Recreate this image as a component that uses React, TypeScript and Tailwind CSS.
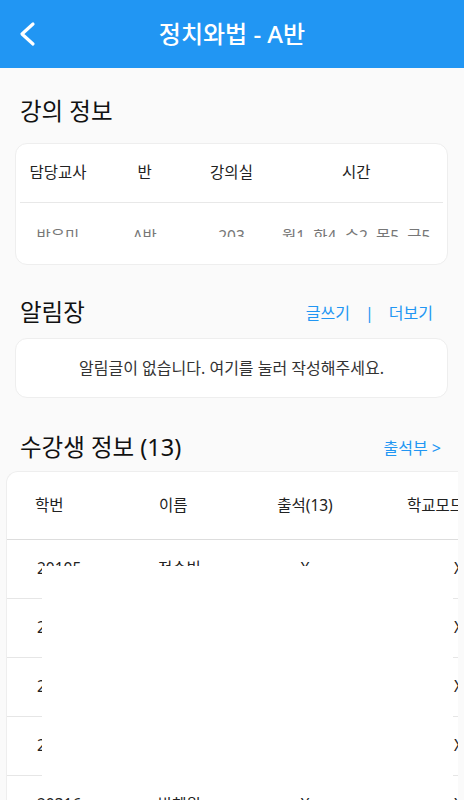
import React from "react";

const font = { fontFamily: '"Noto Sans", "Noto Sans CJK KR", sans-serif' };

function Clip({ children, className = "" }: { children: React.ReactNode; className?: string }) {
  return (
    <div className={"h-[8px] overflow-hidden leading-[15px] " + className}>
      {children}
    </div>
  );
}

const students = [
  ["20105", "전수빈", "X", "X"],
  ["20108", "김민지", "X", "X"],
  ["20112", "이서연", "X", "X"],
  ["20214", "최지우", "X", "X"],
  ["20316", "박혜원", "X", "X"],
];

export default function App() {
  return (
    <div className="w-[464px] h-[800px] overflow-hidden bg-[#fafafa]" style={font}>
      <div className="h-[68px] bg-[#2196f3] flex items-center relative">
        <svg className="absolute left-[17px] top-[21px]" width="22" height="26" viewBox="0 0 22 26">
          <polyline points="16,3 5,13 16,23" fill="none" stroke="white" strokeWidth="3.2" strokeLinecap="round" strokeLinejoin="round" />
        </svg>
        <div className="w-full text-center text-white text-[24px] font-medium">정치와법 - A반</div>
      </div>

      <div className="mt-[29px] h-[30px] flex items-center pl-[20px] text-[23.5px] text-[#111]">강의 정보</div>
      <div className="mt-[16px] mx-[15px] w-[433px] h-[122px] bg-white rounded-[12px] border border-[#eeeeee] px-[4px]">
        <div className="h-[59px] flex items-center border-b border-[#e8e8e8] text-[15.5px] text-[#222]">
          <div className="w-[76px] text-center">담당교사</div>
          <div className="w-[98px] text-center">반</div>
          <div className="w-[76px] text-center">강의실</div>
          <div className="w-[174px] text-center">시간</div>
        </div>
        <div className="h-[61px] flex items-start pt-[26px] text-[15.5px] text-[#777]">
          <div className="w-[76px] text-center"><Clip>박은미</Clip></div>
          <div className="w-[98px] text-center"><Clip>A반</Clip></div>
          <div className="w-[76px] text-center"><Clip>203</Clip></div>
          <div className="w-[174px] text-center whitespace-nowrap"><Clip>월1, 화4, 수2, 목5, 금5</Clip></div>
        </div>
      </div>

      <div className="mt-[33px] h-[30px] flex items-center pl-[20px] pr-[31px]">
        <div className="text-[23.5px] text-[#111] flex-1">알림장</div>
        <div className="text-[16px] text-[#2196f3] flex items-center">
          <span>글쓰기</span>
          <span className="mx-[15px]">|</span>
          <span>더보기</span>
        </div>
      </div>
      <div className="mt-[10px] mx-[15px] w-[433px] h-[60px] bg-white rounded-[12px] border border-[#eeeeee] flex items-center justify-center text-[16px] text-[#333]">
        알림글이 없습니다. 여기를 눌러 작성해주세요.
      </div>

      <div className="mt-[35px] h-[30px] flex items-center pl-[20px] pr-[23px]">
        <div className="text-[23.5px] text-[#111] flex-1">수강생 정보 (13)</div>
        <div className="text-[16px] text-[#2196f3]">출석부 &gt;</div>
      </div>
      <div className="mt-[8px] ml-[6px] w-[452px] overflow-hidden">
        <div className="relative w-[560px] bg-white rounded-tl-[12px] border-l border-t border-[#eeeeee]">
          <div className="h-[68px] flex items-center border-b border-[#dddddd] text-[15.5px] text-[#222]">
            <div className="w-[123px] pl-[28px]">학번</div>
            <div className="w-[110px] pl-[29px]">이름</div>
            <div className="w-[130px] text-center">출석(13)</div>
            <div className="w-[150px] pl-[37px] whitespace-nowrap">학교모드</div>
          </div>
          {students.map((s, i) => (
            <div key={i} className="h-[59px] flex items-center border-b border-[#e6e6e6] text-[15.5px] text-[#222]">
              <div className="w-[123px] pl-[30px]">{s[0]}</div>
              <div className="w-[110px] pl-[28px]">{s[1]}</div>
              <div className="w-[130px] text-center">{s[2]}</div>
              <div className="w-[150px] pl-[84px]">{s[3]}</div>
            </div>
          ))}
          <div className="absolute left-[35px] top-[94px] w-[411px] h-[231px] bg-white" />
        </div>
      </div>
    </div>
  );
}
